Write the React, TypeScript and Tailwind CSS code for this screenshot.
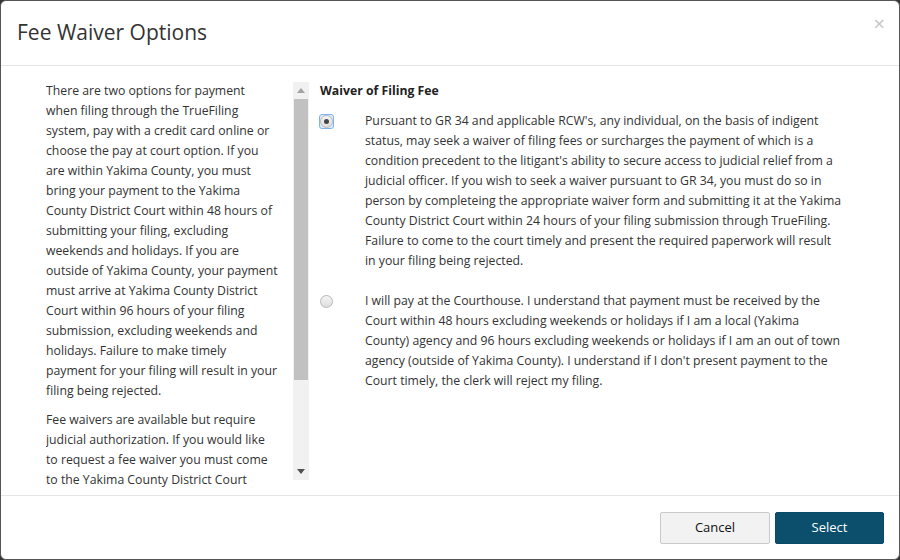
import React from "react";

// Lines are kept as rendered in the reference so wraps match.
const intro = [
  [
    "There are two options for payment",
    "when filing through the TrueFiling",
    "system, pay with a credit card online or",
    "choose the pay at court option. If you",
    "are within Yakima County, you must",
    "bring your payment to the Yakima",
    "County District Court within 48 hours of",
    "submitting your filing, excluding",
    "weekends and holidays. If you are",
    "outside of Yakima County, your payment",
    "must arrive at Yakima County District",
    "Court within 96 hours of your filing",
    "submission, excluding weekends and",
    "holidays. Failure to make timely",
    "payment for your filing will result in your",
    "filing being rejected.",
  ],
  [
    "Fee waivers are available but require",
    "judicial authorization. If you would like",
    "to request a fee waiver you must come",
    "to the Yakima County District Court",
  ],
];

const options = [
  {
    id: "waiver",
    checked: true,
    lines: [
      "Pursuant to GR 34 and applicable RCW's, any individual, on the basis of indigent",
      "status, may seek a waiver of filing fees or surcharges the payment of which is a",
      "condition precedent to the litigant's ability to secure access to judicial relief from a",
      "judicial officer. If you wish to seek a waiver pursuant to GR 34, you must do so in",
      "person by completeing the appropriate waiver form and submitting it at the Yakima",
      "County District Court within 24 hours of your filing submission through TrueFiling.",
      "Failure to come to the court timely and present the required paperwork will result",
      "in your filing being rejected.",
    ],
  },
  {
    id: "court",
    checked: false,
    lines: [
      "I will pay at the Courthouse. I understand that payment must be received by the",
      "Court within 48 hours excluding weekends or holidays if I am a local (Yakima",
      "County) agency and 96 hours excluding weekends or holidays if I am an out of town",
      "agency (outside of Yakima County). I understand if I don't present payment to the",
      "Court timely, the clerk will reject my filing.",
    ],
  },
];

function Radio({ checked }: { checked: boolean }) {
  return (
    <div className={`flex-shrink-0 flex items-center justify-center w-[15px] h-[15px] rounded-[3px] ${checked ? "border border-[#7eb4ea] bg-[#dcecfc]" : "border border-transparent"}`}>
      <div className="w-[13px] h-[13px] rounded-full border border-[#b8b8b8] bg-gradient-to-b from-[#f4f4f4] to-[#dedede] flex items-center justify-center">
        {checked && <div className="w-[5px] h-[5px] rounded-full bg-[#444]" />}
      </div>
    </div>
  );
}

function Scrollbar() {
  return (
    <div className="w-[16px] h-[398px] bg-[#f1f1f1] flex flex-col items-center">
      <div className="h-[17px] flex items-center justify-center">
        <svg width="8" height="5" viewBox="0 0 8 5"><path d="M4 0 L8 5 L0 5 Z" fill="#a3a3a3" /></svg>
      </div>
      <div className="w-[14px] h-[281px] bg-[#c1c1c1]" />
      <div className="flex-1" />
      <div className="h-[17px] flex items-center justify-center">
        <svg width="8" height="5" viewBox="0 0 8 5"><path d="M0 0 L8 0 L4 5 Z" fill="#505050" /></svg>
      </div>
    </div>
  );
}

export default function App() {
  return (
    <div className="w-[900px] h-[560px] bg-[#333] font-['Open_Sans',sans-serif] text-[#333]">
      <div className="w-full h-full bg-white rounded-[6px] border border-[#555] flex flex-col overflow-hidden">
        {/* Header */}
        <div className="h-[65px] flex-shrink-0 border-b border-[#e5e5e5] flex items-center justify-between pl-[16px] pr-[14px]">
          <h2 className="text-[21px] text-[#333] leading-none pb-[1px]">Fee Waiver Options</h2>
          <button className="text-[#c4c4c4] text-[20px] leading-none -mt-[18px]">×</button>
        </div>

        {/* Body */}
        <div className="flex-1 flex pt-[15px]">
          <div className="ml-[45px] flex items-start">
            <div className="w-[238px] h-[409px] overflow-hidden text-[12.25px] leading-[20px] whitespace-nowrap">
              {intro.map((p, i) => (
                <p key={i} className="mb-[9px]">
                  {p.map((l, j) => (
                    <span key={j} className="block">{l}</span>
                  ))}
                </p>
              ))}
            </div>
            <div className="ml-[9px] mt-[1px]">
              <Scrollbar />
            </div>
          </div>

          <div className="ml-[11px] w-[520px]">
            <h3 className="text-[12.25px] font-bold leading-[20px] text-[#222]">Waiver of Filing Fee</h3>
            <div className="mt-[10px] flex flex-col gap-[20px]">
              {options.map((o) => (
                <label key={o.id} className="flex items-start">
                  <div className="mt-[3px] -ml-[1px]">
                    <Radio checked={o.checked} />
                  </div>
                  <p className="ml-[31px] text-[12.25px] leading-[20px] whitespace-nowrap">
                    {o.lines.map((l, j) => (
                      <span key={j} className="block">{l}</span>
                    ))}
                  </p>
                </label>
              ))}
            </div>
          </div>
        </div>

        {/* Footer */}
        <div className="h-[64px] flex-shrink-0 border-t border-[#e5e5e5] flex items-center justify-end gap-[5px] pr-[15px]">
          <button className="w-[110px] h-[32px] rounded-[2px] border border-[#c9c9c9] bg-[#f2f2f3] text-[13px] text-[#111]">Cancel</button>
          <button className="w-[109px] h-[32px] rounded-[2px] border border-[#0a4a66] bg-[#0b4f6c] text-[13px] text-white">Select</button>
        </div>
      </div>
    </div>
  );
}
